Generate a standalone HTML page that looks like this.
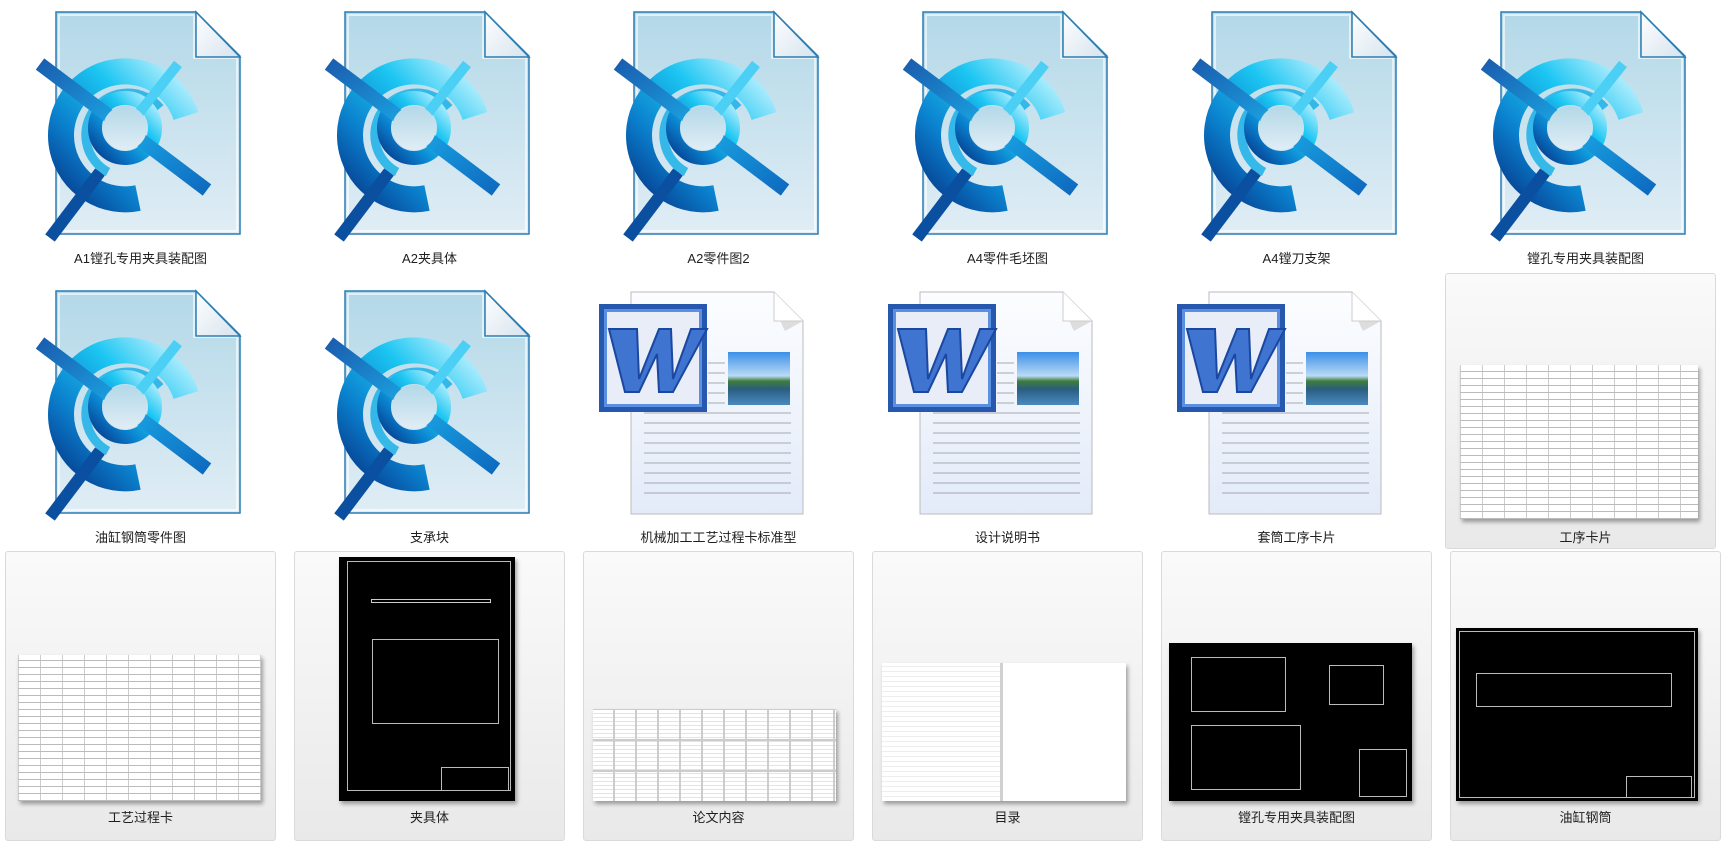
<!DOCTYPE html>
<html><head><meta charset="utf-8">
<style>
*{margin:0;padding:0;box-sizing:border-box}
body{width:1733px;height:828px;background:#fff;position:relative;overflow:hidden;font-family:"Liberation Sans","Noto Sans CJK SC",sans-serif}
.ic{position:absolute;width:289px;height:279px}
.lbl{position:absolute;width:271px;text-align:center;font-size:13px;color:#1e1e1e;line-height:16px}
.tile{position:absolute;width:271px;border:1px solid #dadada;border-radius:3px;background:linear-gradient(#fafafa,#e9e9e9)}
.th{position:absolute;box-shadow:2px 3px 4px rgba(0,0,0,.35)}
.tbl{background:#fff;background-image:repeating-linear-gradient(0deg,#bbb 0 1px,transparent 1px 7px),repeating-linear-gradient(90deg,#ccc 0 1px,transparent 1px 22px)}
.blk{background:#000}
.blk .f{position:absolute;border:1px solid #bbb}
.blk .l{position:absolute;background:#ccc}
</style></head><body>
<svg width="0" height="0" style="position:absolute">
<defs>
<linearGradient id="pg" x1="0" y1="0" x2="0" y2="1"><stop offset="0" stop-color="#b3d8e8"/><stop offset="1" stop-color="#e0edf5"/></linearGradient>
<linearGradient id="fg" x1="0" y1="0" x2="1" y2="1"><stop offset="0" stop-color="#fff"/><stop offset="1" stop-color="#d6e3ee"/></linearGradient>
<linearGradient id="cg" x1="1" y1="0" x2="0" y2="1"><stop offset="0" stop-color="#c8f4ff"/><stop offset=".35" stop-color="#1cc6f2"/><stop offset=".7" stop-color="#0a7fcc"/><stop offset="1" stop-color="#063a8c"/></linearGradient>
<linearGradient id="bg1" x1="0" y1="0" x2="1" y2="1"><stop offset="0" stop-color="#1a5fb0"/><stop offset=".5" stop-color="#1aa8e6"/><stop offset="1" stop-color="#0e6bc0"/></linearGradient>
<linearGradient id="wp" x1="0" y1="0" x2="0" y2="1"><stop offset="0" stop-color="#fcfdff"/><stop offset="1" stop-color="#e3ebf9"/></linearGradient>
<linearGradient id="sky" x1="0" y1="0" x2="0" y2="1"><stop offset="0" stop-color="#3c8fe8"/><stop offset=".45" stop-color="#b9dbf5"/><stop offset=".55" stop-color="#3f7d3a"/><stop offset=".7" stop-color="#2a5e80"/><stop offset="1" stop-color="#4a8ac0"/></linearGradient>
<g id="cad">
<path d="M56,12H196L240,56V234H56Z" fill="url(#pg)" stroke="#2b7db3" stroke-width="1.5"/>
<path d="M59,15H194V58H237V231H59Z" fill="none" stroke="#fff" stroke-width="1.5" opacity=".8"/>
<path d="M196,12V57H240Z" fill="url(#fg)" stroke="#2b7db3" stroke-width="1.5"/>
<path d="M186,116A64,64 0 1 0 138,198" fill="none" stroke="url(#cg)" stroke-width="26"/>
<path d="M160,108A42,42 0 1 0 108,172" fill="none" stroke="#1ab0e8" stroke-width="9" opacity=".85"/>
<circle cx="125" cy="128" r="30" fill="none" stroke="url(#cg)" stroke-width="14"/>
<line x1="40" y1="64" x2="207" y2="190" stroke="url(#bg1)" stroke-width="14"/>
<line x1="50" y1="238" x2="100" y2="172" stroke="#0a4fa0" stroke-width="12"/>
<line x1="135" y1="118" x2="178" y2="64" stroke="#4ccff5" stroke-width="10"/>
<circle cx="125" cy="128" r="22" fill="url(#pg)"/>
</g>
<g id="word">
<path d="M53,13H196L225,42V235H53Z" fill="url(#wp)" stroke="#bbb" stroke-width="1"/>
<path d="M196,13Q200,40 225,42L207,52Q200,40 196,13Z" fill="#ddd"/>
<path d="M196,13V42H225" fill="#fff" stroke="#ccc"/>
<g stroke="#a8a8b0" stroke-width="1">
<line x1="130" y1="84" x2="147" y2="84"/><line x1="130" y1="94" x2="147" y2="94"/><line x1="130" y1="104" x2="147" y2="104"/><line x1="130" y1="114" x2="147" y2="114"/><line x1="130" y1="124" x2="147" y2="124"/>
<line x1="66" y1="134" x2="213" y2="134"/><line x1="66" y1="144" x2="213" y2="144"/><line x1="66" y1="154" x2="213" y2="154"/><line x1="66" y1="164" x2="213" y2="164"/><line x1="66" y1="174" x2="213" y2="174"/><line x1="66" y1="184" x2="213" y2="184"/><line x1="66" y1="194" x2="213" y2="194"/><line x1="66" y1="204" x2="213" y2="204"/><line x1="66" y1="214" x2="213" y2="214"/>
</g>
<rect x="150" y="73" width="62" height="53" fill="url(#sky)"/>
<rect x="21" y="25" width="108" height="108" fill="#2758b0"/>
<rect x="26" y="30" width="98" height="98" fill="#5b8fe0"/>
<rect x="29" y="33" width="92" height="92" fill="#e8edf8"/>
<path d="M36,50H64L66,100L86,50H98L100,100L118,50H134L100,113H86L84,75L66,113H52Z" transform="translate(-5,0)" fill="#3f74d0" stroke="#1a47a0" stroke-width="2"/>
</g>
</defs></svg>

<svg class="ic" style="left:0;top:0"><use href="#cad"/></svg>
<svg class="ic" style="left:289px;top:0"><use href="#cad"/></svg>
<svg class="ic" style="left:578px;top:0"><use href="#cad"/></svg>
<svg class="ic" style="left:867px;top:0"><use href="#cad"/></svg>
<svg class="ic" style="left:1156px;top:0"><use href="#cad"/></svg>
<svg class="ic" style="left:1445px;top:0"><use href="#cad"/></svg>
<div class="lbl" style="left:5px;top:251px">A1镗孔专用夹具装配图</div>
<div class="lbl" style="left:294px;top:251px">A2夹具体</div>
<div class="lbl" style="left:583px;top:251px">A2零件图2</div>
<div class="lbl" style="left:872px;top:251px">A4零件毛坯图</div>
<div class="lbl" style="left:1161px;top:251px">A4镗刀支架</div>
<div class="lbl" style="left:1450px;top:251px">镗孔专用夹具装配图</div>

<svg class="ic" style="left:0;top:279px"><use href="#cad"/></svg>
<svg class="ic" style="left:289px;top:279px"><use href="#cad"/></svg>
<svg class="ic" style="left:578px;top:279px"><use href="#word"/></svg>
<svg class="ic" style="left:867px;top:279px"><use href="#word"/></svg>
<svg class="ic" style="left:1156px;top:279px"><use href="#word"/></svg>
<div class="tile" style="left:1445px;top:273px;height:276px"></div>
<div class="th tbl" style="left:1460px;top:365px;width:238px;height:154px"></div>
<div class="lbl" style="left:5px;top:530px">油缸钢筒零件图</div>
<div class="lbl" style="left:294px;top:530px">支承块</div>
<div class="lbl" style="left:583px;top:530px">机械加工工艺过程卡标准型</div>
<div class="lbl" style="left:872px;top:530px">设计说明书</div>
<div class="lbl" style="left:1161px;top:530px">套筒工序卡片</div>
<div class="lbl" style="left:1450px;top:530px">工序卡片</div>

<div class="tile" style="left:5px;top:551px;height:290px"></div>
<div class="tile" style="left:294px;top:551px;height:290px"></div>
<div class="tile" style="left:583px;top:551px;height:290px"></div>
<div class="tile" style="left:872px;top:551px;height:290px"></div>
<div class="tile" style="left:1161px;top:551px;height:290px"></div>
<div class="tile" style="left:1450px;top:551px;height:290px"></div>

<div class="th tbl" style="left:18px;top:655px;width:243px;height:146px"></div>
<div class="th blk" style="left:339px;top:557px;width:176px;height:244px">
<div class="f" style="left:8px;top:4px;right:4px;bottom:10px"></div>
<div class="l" style="left:32px;top:42px;width:120px;height:4px;background:none;border:1px solid #ccc"></div>
<div class="f" style="left:33px;top:82px;width:127px;height:85px"></div>
<div class="f" style="left:102px;top:210px;width:68px;height:24px"></div>
</div>
<div class="th" style="left:593px;top:709px;width:243px;height:92px;background:#fff;background-image:repeating-linear-gradient(90deg,transparent 0 20px,#ccc 20px 22px),repeating-linear-gradient(0deg,transparent 0 29px,#ccc 29px 31px),repeating-linear-gradient(0deg,#fff 0 3px,#e4e4e4 3px 4px)"></div>
<div class="th" style="left:882px;top:663px;width:244px;height:138px;background:linear-gradient(90deg,#fff 0 118px,#d0d0d0 118px 121px,#fff 121px);"></div>
<div class="th" style="left:882px;top:663px;width:118px;height:138px;background:repeating-linear-gradient(0deg,transparent 0 4px,#eee 4px 5px);box-shadow:none"></div>
<div class="th blk" style="left:1169px;top:643px;width:243px;height:158px">
<div class="f" style="left:22px;top:14px;width:95px;height:55px"></div>
<div class="f" style="left:160px;top:22px;width:55px;height:40px"></div>
<div class="f" style="left:22px;top:82px;width:110px;height:65px"></div>
<div class="f" style="left:190px;top:106px;width:48px;height:48px"></div>
</div>
<div class="th blk" style="left:1456px;top:628px;width:242px;height:173px">
<div class="f" style="left:3px;top:3px;right:3px;bottom:3px"></div>
<div class="f" style="left:20px;top:45px;width:196px;height:34px"></div>
<div class="f" style="left:170px;top:148px;width:66px;height:22px"></div>
</div>

<div class="lbl" style="left:5px;top:810px">工艺过程卡</div>
<div class="lbl" style="left:294px;top:810px">夹具体</div>
<div class="lbl" style="left:583px;top:810px">论文内容</div>
<div class="lbl" style="left:872px;top:810px">目录</div>
<div class="lbl" style="left:1161px;top:810px">镗孔专用夹具装配图</div>
<div class="lbl" style="left:1450px;top:810px">油缸钢筒</div>
</body></html>
